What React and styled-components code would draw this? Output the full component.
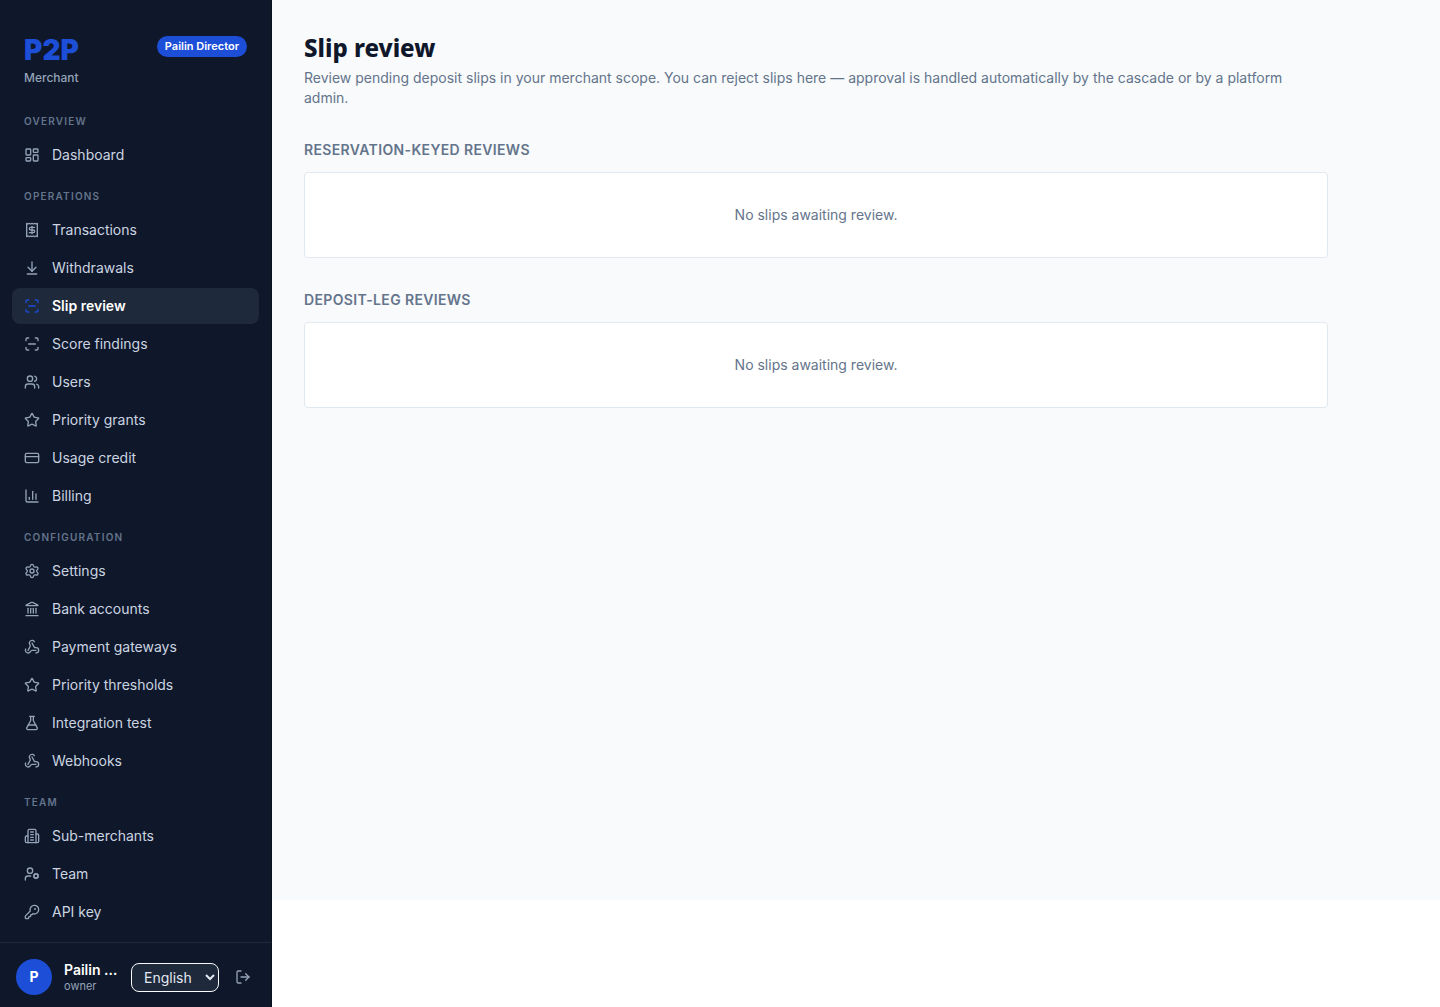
import React from "react";
import styled, { createGlobalStyle } from "styled-components";
import {
  ArrowDownToLine,
  ChartColumn,
  CreditCard,
  FlaskConical,
  KeyRound,
  Landmark,
  LayoutDashboard,
  LogOut,
  Receipt,
  ScanLine,
  Settings,
  Star,
  UserCog,
  Users,
  Webhook,
} from "lucide-react";

const GlobalStyle = createGlobalStyle`
  *, *::before, *::after { box-sizing: border-box; }
  body {
    margin: 0;
    background: #ffffff;
    color: #0f172a;
    font-family: Inter, "Liberation Sans", sans-serif;
    font-size: 14px;
    line-height: 20px;
  }
  h1, h2, p, ul { margin: 0; padding: 0; }
`;

const Shell = styled.div`
  display: flex;
  align-items: flex-start;
`;

const Sidebar = styled.aside`
  display: flex;
  flex-direction: column;
  flex: none;
  width: 272px;
  min-height: 100vh;
  border-right: 1px solid #0b1220;
  background: #0f172a;
`;

const Brand = styled.div`
  display: flex;
  align-items: flex-start;
  justify-content: space-between;
  padding: 36px 24px 26px;
`;

const BrandName = styled.div`
  color: #1d4ed8;
  font-size: 28px;
  font-weight: 900;
  line-height: 28px;
`;

const BrandSub = styled.div`
  margin-top: 4px;
  color: #94a3b8;
  font-size: 12px;
  font-weight: 500;
  line-height: 20px;
`;

const Badge = styled.span`
  padding: 2px 8px;
  border-radius: 999px;
  background: #1d4ed8;
  color: #ffffff;
  font-size: 11px;
  font-weight: 600;
  line-height: 17px;
`;

const Nav = styled.nav`
  flex: 1;
  padding: 0 12px 12px;
`;

const Group = styled.section`
  & + & { margin-top: 16px; }
`;

const GroupLabel = styled.h2`
  padding: 0 12px;
  margin-bottom: 8px;
  color: #64748b;
  font-size: 10px;
  font-weight: 600;
  line-height: 15px;
  letter-spacing: 0.12em;
  text-transform: uppercase;
`;

const NavList = styled.ul`
  display: flex;
  flex-direction: column;
  gap: 2px;
  list-style: none;
`;

const NavLink = styled.a`
  display: flex;
  align-items: center;
  gap: 12px;
  height: 36px;
  padding: 0 12px;
  border-radius: 8px;
  background: ${(p) => (p.$active ? "#1e293b" : "transparent")};
  color: ${(p) => (p.$active ? "#ffffff" : "#cbd5e1")};
  font-weight: ${(p) => (p.$active ? 600 : 400)};
  text-decoration: none;

  svg {
    flex: none;
    color: ${(p) => (p.$active ? "#1d4ed8" : "#94a3b8")};
  }
`;

const Account = styled.div`
  display: flex;
  align-items: center;
  gap: 12px;
  padding: 16px 16px 12px;
  border-top: 1px solid #1e293b;
`;

const Avatar = styled.div`
  display: grid;
  place-items: center;
  flex: none;
  width: 36px;
  height: 36px;
  border-radius: 50%;
  background: #1d4ed8;
  color: #ffffff;
  font-weight: 700;
`;

const Person = styled.div`
  flex: 1;
  min-width: 0;
`;

const PersonName = styled.div`
  overflow: hidden;
  color: #ffffff;
  font-weight: 600;
  line-height: 18px;
  text-overflow: ellipsis;
  white-space: nowrap;
`;

const PersonRole = styled.div`
  color: #94a3b8;
  font-size: 11px;
  line-height: 14px;
`;

const Language = styled.select`
  flex: none;
  width: 88px;
  height: 29px;
  padding: 4px 0 4px 8px;
  border: 1px solid #f8fafc;
  border-radius: 8px;
  background: #1e293b;
  color: #e2e8f0;
  font-family: inherit;
  font-size: 14px;
`;

const IconButton = styled.button`
  display: grid;
  place-items: center;
  flex: none;
  width: 24px;
  height: 24px;
  padding: 0;
  border: 0;
  background: transparent;
  color: #94a3b8;
  cursor: pointer;
`;

const Main = styled.main`
  flex: 1;
  min-width: 0;
  min-height: 900px;
  padding: 32px;
  background: #f8fafc;
`;

const Content = styled.div`
  display: flex;
  flex-direction: column;
  gap: 32px;
  max-width: 1024px;
`;

const Title = styled.h1`
  margin-bottom: 4px;
  font-family: "Noto Sans", sans-serif;
  font-size: 24px;
  font-weight: 800;
  line-height: 32px;
`;

const Lead = styled.p`
  color: #64748b;
`;

const SectionTitle = styled.h2`
  margin-bottom: 12px;
  color: #64748b;
  font-size: 14px;
  font-weight: 600;
  line-height: 20px;
  letter-spacing: 0.025em;
  text-transform: uppercase;
`;

const EmptyCard = styled.div`
  padding: 32px;
  border: 1px solid #e2e8f0;
  border-radius: 4px;
  background: #ffffff;
  color: #64748b;
  text-align: center;
`;

function OfficeBlock({ size = 24, strokeWidth = 2, ...rest }) {
  return (
    <svg
      width={size}
      height={size}
      viewBox="0 0 24 24"
      fill="none"
      stroke="currentColor"
      strokeWidth={strokeWidth}
      strokeLinecap="round"
      strokeLinejoin="round"
      {...rest}
    >
      <path d="M6 22V4a2 2 0 0 1 2-2h8a2 2 0 0 1 2 2v18Z" />
      <path d="M6 12H4a2 2 0 0 0-2 2v6a2 2 0 0 0 2 2h2" />
      <path d="M18 9h2a2 2 0 0 1 2 2v9a2 2 0 0 1-2 2h-2" />
      <path d="M10 6h4M10 10h4M10 14h4M10 18h4" />
    </svg>
  );
}

const groups = [
  { label: "Overview", items: [["Dashboard", LayoutDashboard]] },
  {
    label: "Operations",
    items: [
      ["Transactions", Receipt],
      ["Withdrawals", ArrowDownToLine],
      ["Slip review", ScanLine],
      ["Score findings", ScanLine],
      ["Users", Users],
      ["Priority grants", Star],
      ["Usage credit", CreditCard],
      ["Billing", ChartColumn],
    ],
  },
  {
    label: "Configuration",
    items: [
      ["Settings", Settings],
      ["Bank accounts", Landmark],
      ["Payment gateways", Webhook],
      ["Priority thresholds", Star],
      ["Integration test", FlaskConical],
      ["Webhooks", Webhook],
    ],
  },
  {
    label: "Team",
    items: [
      ["Sub-merchants", OfficeBlock],
      ["Team", UserCog],
      ["API key", KeyRound],
    ],
  },
];

const queues = ["Reservation-keyed reviews", "Deposit-leg reviews"];
const current = "Slip review";

export default function App() {
  return (
    <>
      <GlobalStyle />
      <Shell>
        <Sidebar>
          <Brand>
            <div>
              <BrandName>P2P</BrandName>
              <BrandSub>Merchant</BrandSub>
            </div>
            <Badge>Pailin Director</Badge>
          </Brand>
          <Nav aria-label="Main">
            {groups.map((group) => (
              <Group key={group.label}>
                <GroupLabel>{group.label}</GroupLabel>
                <NavList>
                  {group.items.map(([name, Icon]) => (
                    <li key={name}>
                      <NavLink
                        href="#"
                        $active={name === current}
                        aria-current={name === current ? "page" : undefined}
                      >
                        <Icon size={16} strokeWidth={2} aria-hidden="true" />
                        {name}
                      </NavLink>
                    </li>
                  ))}
                </NavList>
              </Group>
            ))}
          </Nav>
          <Account>
            <Avatar>P</Avatar>
            <Person>
              <PersonName>Pailin Director</PersonName>
              <PersonRole>owner</PersonRole>
            </Person>
            <Language aria-label="Language" defaultValue="en">
              <option value="en">English</option>
            </Language>
            <IconButton type="button" aria-label="Sign out">
              <LogOut size={16} strokeWidth={2} />
            </IconButton>
          </Account>
        </Sidebar>
        <Main>
          <Content>
            <header>
              <Title>Slip review</Title>
              <Lead>
                Review pending deposit slips in your merchant scope. You can reject slips here — approval is
                handled automatically by the cascade or by a platform admin.
              </Lead>
            </header>
            {queues.map((queue) => (
              <section key={queue}>
                <SectionTitle>{queue}</SectionTitle>
                <EmptyCard>No slips awaiting review.</EmptyCard>
              </section>
            ))}
          </Content>
        </Main>
      </Shell>
    </>
  );
}
